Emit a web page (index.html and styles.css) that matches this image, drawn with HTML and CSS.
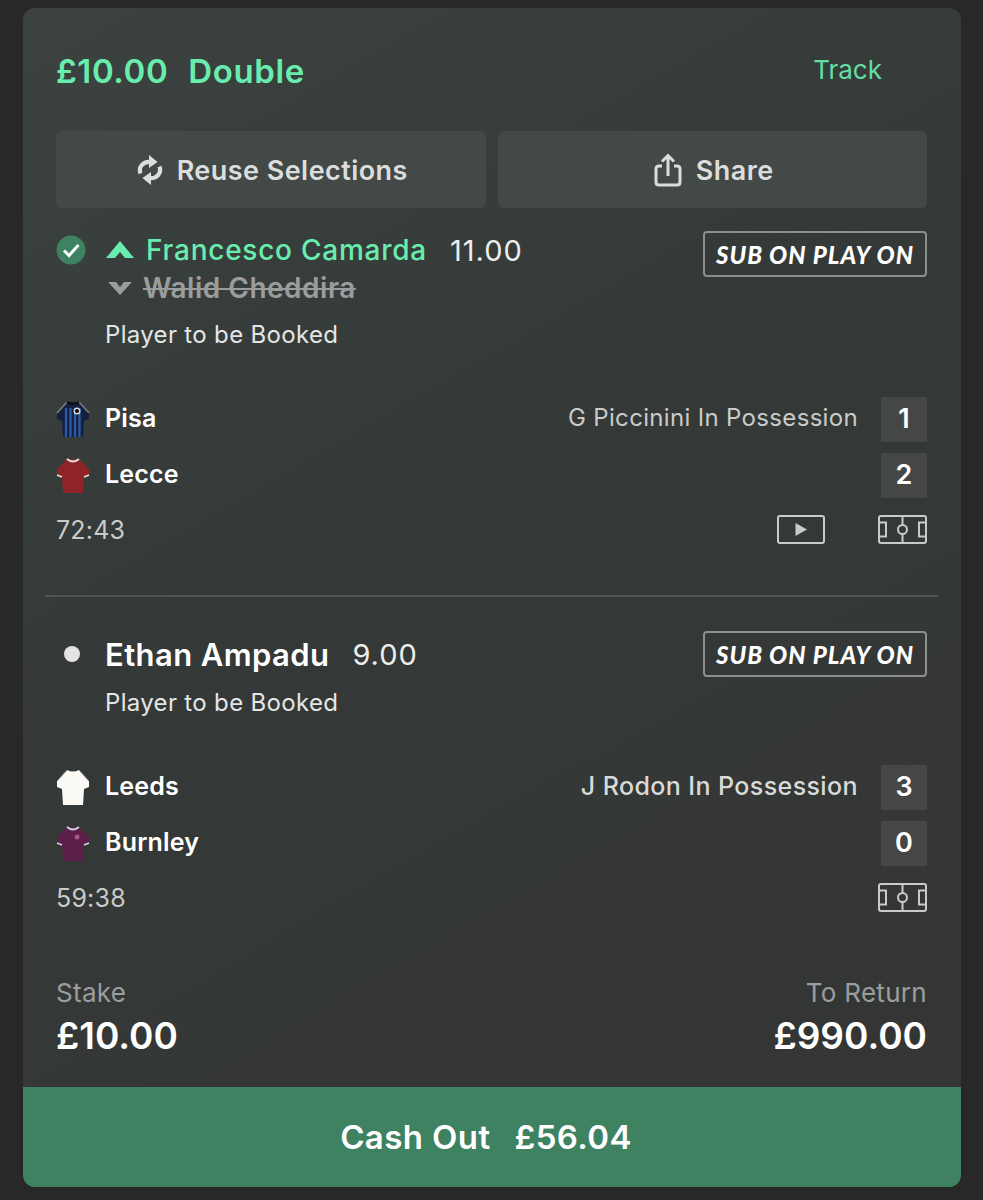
FILE: index.html
```html
<!DOCTYPE html>
<html lang="en">
<head>
    <meta charset="UTF-8">
    <meta name="viewport" content="width=device-width, initial-scale=1.0">
    <title>My Bets</title>
    <link rel="stylesheet" href="styles.css">
</head>
<body>
<div class="card">
    <div class="card-body">
        <div class="head">
            <div class="title"><span>£10.00</span><span>Double</span></div>
            <a class="track">Track</a>
        </div>
        <div class="actions">
            <button class="action">
                <svg class="sync-icon" viewBox="0 0 26 32" width="26" height="32">
                    <path d="M3.5 19.5C1.2 13.5 5.5 7.5 13 7.8" fill="none" stroke="#dcdedd" stroke-width="4.2"/>
                    <path d="M12 1L20.5 8L12 14Z" fill="#dcdedd"/>
                    <path d="M22.5 12.5C24.8 18.5 20.5 24.5 13 24.2" fill="none" stroke="#dcdedd" stroke-width="4.2"/>
                    <path d="M14 18L5.5 24L14 31Z" fill="#dcdedd"/>
                </svg>
                <span>Reuse Selections</span>
            </button>
            <button class="action">
                <svg class="share-icon" viewBox="0 0 28 34" width="28" height="34">
                    <path d="M8 13H5Q2 13 2 16V29Q2 32 5 32H23Q26 32 26 29V16Q26 13 23 13H20" fill="none" stroke="#dcdedd" stroke-width="3"/>
                    <path d="M14 23V3M8 8.5L14 2.5L20 8.5" fill="none" stroke="#dcdedd" stroke-width="3"/>
                </svg>
                <span>Share</span>
            </button>
        </div>

        <div class="selection selection-first">
            <div class="status">
                <svg viewBox="0 0 30 30" width="30" height="30">
                    <circle cx="15" cy="15" r="14.5" fill="#3f8262"/>
                    <path d="M8 15.5L13 20.5L22.5 10" fill="none" stroke="#fff" stroke-width="3"/>
                </svg>
            </div>
            <div class="selection-info">
                <div class="sub-line">
                    <svg class="chevron" viewBox="0 0 30 20" width="30" height="20"><path d="M15 1L29 18H20L15 12L10 18H1Z" fill="#69edae"/></svg>
                    <span class="player-on">Francesco Camarda</span>
                    <span class="price">11.00</span>
                </div>
                <div class="sub-line">
                    <svg class="chevron" viewBox="0 0 30 20" width="30" height="20"><path d="M15 17L27 4H19L15 9L11 4H3Z" fill="#9b9c9c"/></svg>
                    <span class="player-off">Walid Cheddira</span>
                </div>
                <div class="market">Player to be Booked</div>
            </div>
            <div class="sub-badge">SUB ON PLAY ON</div>
        </div>

        <div class="match match-first">
            <div class="team-row">
                <svg class="shirt" viewBox="0 0 34 38" width="34" height="38">
                    <path d="M11 1L23 1L33 12L33 18L28 20L27 36L7 36L6 20L1 18L1 12Z" fill="#15203f"/>
                    <path d="M10 7V36M14.500 7V36M19 7V36M23.500 7V36" stroke="#2d5cab" stroke-width="2.200"/>
                    <path d="M23 1L33 12M11 1L1 12" fill="none" stroke="#777d80" stroke-width="1.600"/>
                    <path d="M11 1Q17 5 23 1" fill="none" stroke="#0c0f18" stroke-width="2"/>
                    <circle cx="21" cy="10" r="2.800" fill="#111" stroke="#d8d8d8" stroke-width="1.400"/>
                </svg>
                <span class="team">Pisa</span>
                <span class="possession">G Piccinini In Possession</span>
                <span class="score">1</span>
            </div>
            <div class="team-row">
                <svg class="shirt" viewBox="0 0 34 38" width="34" height="38">
                    <path d="M11 2L23 2L33 12L33 18L28 20L27 36L7 36L6 20L1 18L1 12Z" fill="#8f2428"/>
                    <path d="M11 2Q17 7 23 2" fill="none" stroke="#e8dcd8" stroke-width="2"/>
                    <path d="M1 18L6 20M33 18L28 20" stroke="#e8dcd8" stroke-width="1.600"/>
                </svg>
                <span class="team">Lecce</span>
                <span class="score">2</span>
            </div>
            <div class="time-row">
                <span class="clock">72:43</span>
                <svg class="video-icon" viewBox="0 0 48 29" width="48" height="29">
                    <rect x="1" y="1" width="46" height="27" rx="2" fill="none" stroke="#c9cbca" stroke-width="2"/>
                    <path d="M18.5 8L30 14.5L18.5 21Z" fill="#c9cbca"/>
                </svg>
                <svg class="pitch-icon" viewBox="0 0 49 29" width="49" height="29">
                    <rect x="1" y="1" width="47" height="27" rx="2" fill="none" stroke="#c9cbca" stroke-width="2"/>
                    <path d="M24.5 1V10M24.5 19V28M1 7.5H8V21.5H1M48 7.5H41V21.5H48" fill="none" stroke="#c9cbca" stroke-width="2"/>
                    <circle cx="24.5" cy="14.5" r="4.5" fill="none" stroke="#c9cbca" stroke-width="2"/>
                </svg>
            </div>
        </div>

        <div class="divider"></div>

        <div class="selection selection-second">
            <div class="status"><span class="dot"></span></div>
            <div class="selection-info">
                <div class="sub-line sub-main">
                    <span class="player-main">Ethan Ampadu</span>
                    <span class="price">9.00</span>
                </div>
                <div class="market">Player to be Booked</div>
            </div>
            <div class="sub-badge">SUB ON PLAY ON</div>
        </div>

        <div class="match match-second">
            <div class="team-row">
                <svg class="shirt" viewBox="0 0 34 38" width="34" height="38">
                    <path d="M11 1Q17 4 23 1L33 12L33 18L28 20L27 36L7 36L6 20L1 18L1 12Z" fill="#fbfaf5"/>
                    <path d="M23 1L33 12M11 1L1 12" fill="none" stroke="#6f7590" stroke-width="1"/>
                </svg>
                <span class="team">Leeds</span>
                <span class="possession possession-bold">J Rodon In Possession</span>
                <span class="score">3</span>
            </div>
            <div class="team-row">
                <svg class="shirt" viewBox="0 0 34 38" width="34" height="38">
                    <path d="M11 2L23 2L33 12L33 18L28 20L27 36L7 36L6 20L1 18L1 12Z" fill="#5e1e4a"/>
                    <path d="M11 2Q17 7 23 2" fill="none" stroke="#c9d3e6" stroke-width="2"/>
                    <path d="M1 18L6 20M33 18L28 20" stroke="#c9d3e6" stroke-width="1.600"/>
                    <circle cx="21" cy="12" r="2.500" fill="#a8557f"/>
                </svg>
                <span class="team">Burnley</span>
                <span class="score">0</span>
            </div>
            <div class="time-row">
                <span class="clock">59:38</span>
                <svg class="pitch-icon" viewBox="0 0 49 29" width="49" height="29">
                    <rect x="1" y="1" width="47" height="27" rx="2" fill="none" stroke="#c9cbca" stroke-width="2"/>
                    <path d="M24.5 1V10M24.5 19V28M1 7.5H8V21.5H1M48 7.5H41V21.5H48" fill="none" stroke="#c9cbca" stroke-width="2"/>
                    <circle cx="24.5" cy="14.5" r="4.5" fill="none" stroke="#c9cbca" stroke-width="2"/>
                </svg>
            </div>
        </div>

        <div class="totals">
            <div>
                <div class="total-label">Stake</div>
                <div class="total-value">£10.00</div>
            </div>
            <div class="total-right">
                <div class="total-label">To Return</div>
                <div class="total-value">£990.00</div>
            </div>
        </div>
    </div>
    <button class="cash-out"><span>Cash Out</span><span>£56.04</span></button>
</div>
</body>
</html>
```

FILE: styles.css
```css
body {
    margin: 0;
    background-color: #282828;
    font-family: Inter, "Liberation Sans", sans-serif;
    color: #fff;
    height: 1200px;
    overflow: hidden;
}
svg {
    display: block;
    flex-shrink: 0;
}
.card {
    margin: 8px 22px 0 23px;
    height: 1179px;
    border-radius: 12px;
    overflow: hidden;
    background: linear-gradient(150deg, #3b4240 0%, #343937 45%, #343534 100%);
    display: flex;
    flex-direction: column;
}
.card-body {
    flex: 1;
    padding: 0 34px 0 33px;
}
.head {
    height: 123px;
    display: flex;
    justify-content: space-between;
    align-items: flex-start;
}
.title {
    margin-top: 41px;
    line-height: 44px;
    font-size: 33px;
    font-weight: 600;
    letter-spacing: 0.6px;
    color: #69edae;
    display: flex;
    gap: 20px;
}
.track {
    margin-top: 43px;
    margin-right: 45px;
    line-height: 38px;
    font-size: 26px;
    color: #62dfa4;
}
.actions {
    display: grid;
    grid-template-columns: 1fr 1fr;
    gap: 12px;
    height: 77px;
}
.action {
    display: flex;
    align-items: center;
    justify-content: center;
    gap: 14px;
    padding: 0 0 0 3px;
    border: none;
    border-radius: 6px;
    background-color: #434947;
    color: #dcdedd;
    font-family: inherit;
    font-size: 27px;
    font-weight: 600;
    letter-spacing: 0.45px;
}
.action span {
    padding-top: 2px;
}
.selection {
    display: flex;
    align-items: flex-start;
}
.selection-first {
    padding-top: 23px;
}
.selection-second {
    padding-top: 34px;
}
.status {
    width: 49px;
    height: 38px;
    display: flex;
    align-items: center;
}
.selection-second .status {
    height: 46px;
}
.dot {
    width: 16px;
    height: 16px;
    margin-left: 8px;
    border-radius: 50%;
    background-color: #e4e4e4;
}
.selection-info {
    flex: 1;
}
.sub-line {
    display: flex;
    align-items: center;
    height: 38px;
}
.sub-main {
    height: 46px;
}
.chevron {
    margin-right: 11px;
}
.player-on {
    font-size: 28px;
    font-weight: 500;
    letter-spacing: 0.75px;
    color: #69edae;
}
.player-off {
    margin-left: -3px;
    font-size: 28px;
    font-weight: 600;
    letter-spacing: 0.5px;
    color: #9b9c9c;
    text-decoration: line-through;
}
.player-main {
    font-size: 31px;
    font-weight: 600;
    letter-spacing: 0.4px;
}
.price {
    margin-left: 23px;
    font-size: 29px;
    letter-spacing: 1px;
    color: #eceeed;
}
.market {
    margin-top: 11px;
    line-height: 34px;
    font-size: 24px;
    letter-spacing: 0.33px;
    color: #e4e6e5;
}
.selection-second .market {
    margin-top: 9px;
}
.sub-badge {
    width: 224px;
    height: 46px;
    box-sizing: border-box;
    border: 2px solid #8c8f8e;
    border-radius: 4px;
    display: flex;
    align-items: center;
    justify-content: center;
    font-family: Lato, sans-serif;
    font-size: 24px;
    font-style: italic;
    font-weight: 900;
    letter-spacing: 1px;
    white-space: nowrap;
}
.match-first {
    margin-top: 45px;
}
.match-second {
    margin-top: 45px;
}
.team-row {
    display: flex;
    align-items: center;
    height: 45px;
    margin-bottom: 11px;
}
.shirt {
    margin-right: 15px;
}
.team {
    flex: 1;
    padding-bottom: 4px;
    font-size: 25px;
    font-weight: 600;
    letter-spacing: 0.2px;
}
.possession {
    margin-right: 23px;
    padding-bottom: 4px;
    font-size: 24px;
    letter-spacing: 0.33px;
    color: #c9cbca;
}
.possession-bold {
    font-size: 25px;
    font-weight: 500;
    letter-spacing: 0.4px;
    color: #d8dad9;
}
.score {
    width: 46px;
    height: 45px;
    padding-bottom: 2px;
    box-sizing: border-box;
    display: flex;
    align-items: center;
    justify-content: center;
    background-color: #444746;
    font-size: 27px;
    font-weight: 600;
}
.time-row {
    display: flex;
    align-items: center;
    height: 29px;
    margin-top: 17px;
}
.clock {
    flex: 1;
    font-size: 25px;
    letter-spacing: 0.2px;
    color: #c9cbca;
}
.video-icon {
    margin-right: 53px;
}
.divider {
    height: 2px;
    margin: 51px -11px 0 -11px;
    background-color: #4f5453;
}
.totals {
    margin-top: 64px;
    display: flex;
    justify-content: space-between;
}
.total-right {
    text-align: right;
}
.total-label {
    line-height: 34px;
    font-size: 26px;
    letter-spacing: 0.3px;
    color: #9c9e9d;
}
.total-value {
    margin-top: 4px;
    line-height: 44px;
    font-size: 37px;
    font-weight: 600;
}
.cash-out {
    height: 100px;
    padding: 0 12px 0 0;
    border: none;
    background-color: #3f8262;
    color: #fff;
    font-family: inherit;
    font-size: 33px;
    font-weight: 600;
    letter-spacing: 0.4px;
    display: flex;
    align-items: center;
    justify-content: center;
    gap: 24px;
}
```
